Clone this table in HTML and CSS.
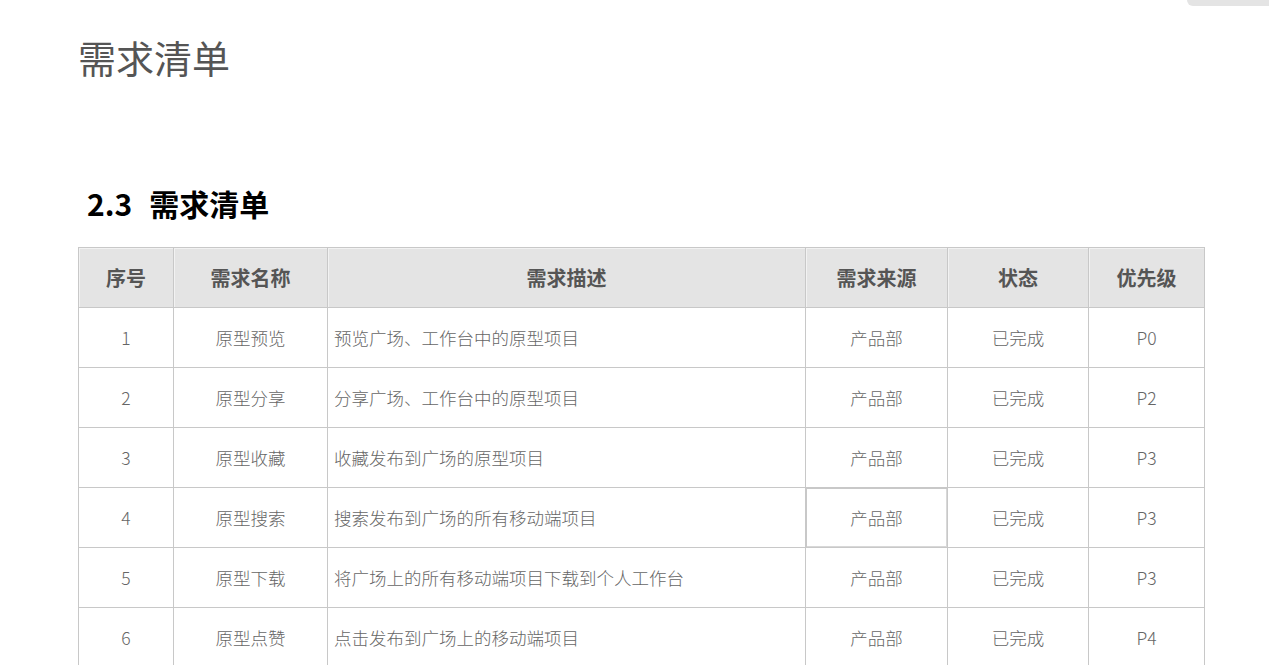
FILE: index.html
```html
<!DOCTYPE html>
<html lang="zh-CN">
<head>
  <meta charset="UTF-8">
  <meta name="viewport" content="width=device-width, initial-scale=1.0">
  <title>需求清单</title>
  <link rel="stylesheet" href="styles.css">
</head>
<body>
  <div class="corner-tab"></div>

  <div class="page">
    <h1 class="page-title">需求清单</h1>

    <h2 class="section-title"><span class="section-num">2.3</span>需求清单</h2>

    <table class="req-table">
      <colgroup>
        <col class="c-no">
        <col class="c-name">
        <col class="c-desc">
        <col class="c-src">
        <col class="c-state">
        <col class="c-pri">
      </colgroup>
      <thead>
        <tr>
          <th>序号</th>
          <th>需求名称</th>
          <th>需求描述</th>
          <th>需求来源</th>
          <th>状态</th>
          <th>优先级</th>
        </tr>
      </thead>
      <tbody>
        <tr>
          <td>1</td>
          <td>原型预览</td>
          <td class="desc">预览广场、工作台中的原型项目</td>
          <td>产品部</td>
          <td>已完成</td>
          <td>P0</td>
        </tr>
        <tr>
          <td>2</td>
          <td>原型分享</td>
          <td class="desc">分享广场、工作台中的原型项目</td>
          <td>产品部</td>
          <td>已完成</td>
          <td>P2</td>
        </tr>
        <tr>
          <td>3</td>
          <td>原型收藏</td>
          <td class="desc">收藏发布到广场的原型项目</td>
          <td>产品部</td>
          <td>已完成</td>
          <td>P3</td>
        </tr>
        <tr>
          <td>4</td>
          <td>原型搜索</td>
          <td class="desc">搜索发布到广场的所有移动端项目</td>
          <td class="selected">产品部</td>
          <td>已完成</td>
          <td>P3</td>
        </tr>
        <tr>
          <td>5</td>
          <td>原型下载</td>
          <td class="desc">将广场上的所有移动端项目下载到个人工作台</td>
          <td>产品部</td>
          <td>已完成</td>
          <td>P3</td>
        </tr>
        <tr>
          <td>6</td>
          <td>原型点赞</td>
          <td class="desc">点击发布到广场上的移动端项目</td>
          <td>产品部</td>
          <td>已完成</td>
          <td>P4</td>
        </tr>
      </tbody>
    </table>
  </div>
</body>
</html>
```

FILE: styles.css
```css
body {
  margin: 0;
  background: #fff;
  font-family: "Noto Sans CJK SC", "Noto Sans", sans-serif;
  overflow: hidden;
}
.corner-tab {
  position: absolute;
  top: 0;
  right: 0;
  width: 82px;
  height: 6px;
  background: #e4e4e4;
  border-bottom-left-radius: 6px;
}
.page {
  padding: 0 0 0 78px;
}
.page-title {
  margin: 0;
  padding-top: 30px;
  font-size: 38px;
  line-height: 54px;
  font-weight: 400;
  color: #555;
}
.section-title {
  margin: 0;
  padding-top: 98px;
  padding-left: 9px;
  font-size: 30px;
  line-height: 42px;
  font-weight: 700;
  color: #000;
}
.section-num {
  margin-right: 17px;
}
.req-table {
  margin-top: 23px;
  width: 1127px;
  border-collapse: collapse;
  table-layout: fixed;
}
.c-no { width: 95px; }
.c-name { width: 154px; }
.c-desc { width: 478px; }
.c-src { width: 142px; }
.c-state { width: 141px; }
.c-pri { width: 116px; }
.req-table th,
.req-table td {
  height: 59px;
  padding: 0;
  border: 1px solid #c8c8c8;
  text-align: center;
  font-size: 17.5px;
}
.req-table th {
  background: #e4e4e4;
  color: #555;
  font-size: 20px;
  font-weight: 700;
  box-shadow: inset 1px 1px 0 #f2f2f2;
}
.req-table td {
  color: #666;
  font-weight: 300;
}
.req-table td.desc {
  text-align: left;
  padding-left: 6px;
}
.req-table td.selected {
  box-shadow: inset 1px 1px 0 #c8c8c8, inset -1px -1px 0 #d8d8d8;
}
```
